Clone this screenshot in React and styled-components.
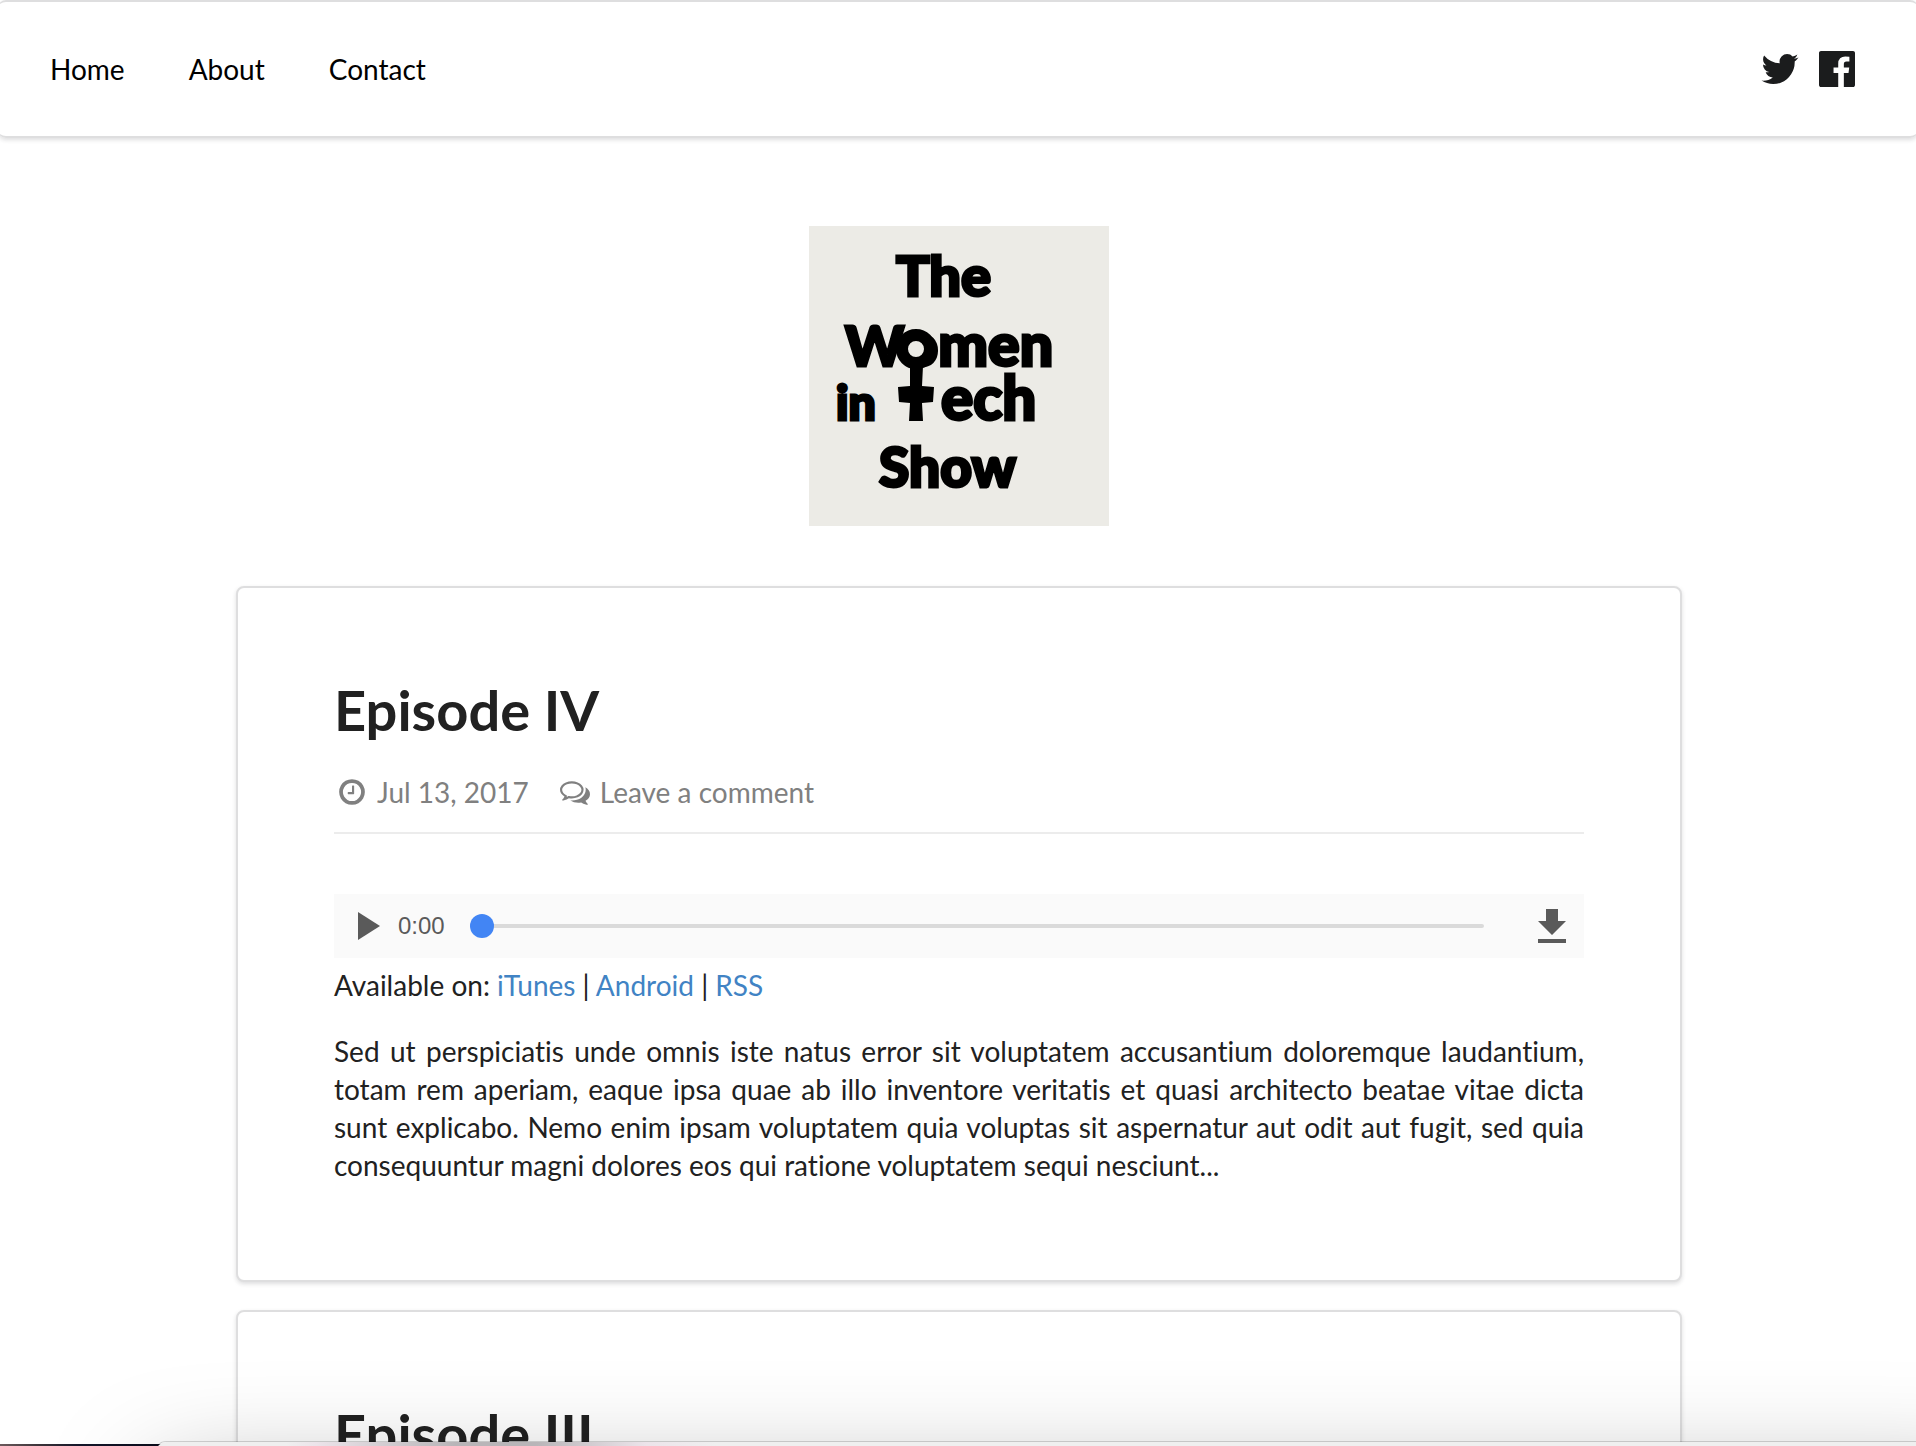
import React, { useState } from "react";
import styled, { createGlobalStyle } from "styled-components";

const GlobalStyle = createGlobalStyle`
  *, *::before, *::after { box-sizing: border-box; }
  html, body { margin: 0; height: 100%; overflow: hidden; }
  body {
    background: #fff;
    color: #212121;
    font-family: Lato, "Noto Sans", sans-serif;
    font-size: 28px;
    line-height: 38px;
    font-variant-ligatures: none;
  }
`;

const Page = styled.div`
  height: 100vh;
  overflow: hidden;
`;

const NavBar = styled.nav`
  display: flex;
  align-items: center;
  justify-content: space-between;
  height: 138px;
  margin: 0 -2px;
  padding: 0 60px 0 20px;
  border: solid #dededf;
  border-width: 2px 0;
  border-radius: 8px;
  box-shadow: 0 2px 4px rgba(34, 36, 38, 0.15);
`;

const NavLinks = styled.div`
  display: flex;
`;

const NavLink = styled.a`
  padding: 32px;
  color: #000;
  text-decoration: none;
`;

const SocialLinks = styled.div`
  display: flex;
  gap: 15px;
`;

const SocialLink = styled.a`
  display: flex;
  color: #1b1c1d;
`;

const Glyph = styled.svg`
  display: block;
  flex: none;
  width: ${(p) => p.$size}px;
  height: ${(p) => p.$size}px;
  fill: currentColor;
`;

const Logo = styled.svg`
  display: block;
  width: 300px;
  height: 300px;
  margin: 0 auto 60px;
  background: #ecebe6;
  font-family: Lato, sans-serif;
  font-weight: 900;
`;

const Content = styled.main`
  padding: 88px 0 0 2px;
`;

const Episodes = styled.section`
  width: 100%;
  max-width: 1446px;
  margin: 0 auto;
  display: flex;
  flex-direction: column;
  gap: 28px;
`;

const Card = styled.article`
  padding: 96px;
  background: #fff;
  border: 2px solid #dededf;
  border-radius: 8px;
  box-shadow: 0 2px 4px rgba(34, 36, 38, 0.15);
`;

const Title = styled.h1`
  margin: 0 0 37px;
  font-size: 56px;
  line-height: 52px;
  font-weight: 700;
`;

const Meta = styled.div`
  display: flex;
  gap: 31px;
  padding: 0 3px 21px;
  margin-bottom: 60px;
  border-bottom: 2px solid #ececec;
  color: #808080;
`;

const MetaItem = styled.span`
  display: flex;
  align-items: center;
  gap: 10px;
`;

const MetaLink = styled(MetaItem)`
  color: inherit;
  text-decoration: none;
`;

const Player = styled.div`
  display: flex;
  align-items: center;
  height: 64px;
  margin-bottom: 8px;
  padding: 0 15px 0 24px;
  background: #fafafa;
  color: #5a5a5a;
`;

const PlayerButton = styled.button`
  display: flex;
  padding: 0;
  border: 0;
  background: none;
  color: inherit;
  cursor: pointer;
`;

const Time = styled.span`
  margin: 0 25px 0 12px;
  font-family: "Liberation Sans", sans-serif;
  font-size: 24px;
`;

const Seek = styled.input`
  flex: 1;
  min-width: 0;
  height: 24px;
  margin: 0 51px 0 0;
  appearance: none;
  background: transparent;

  &::-webkit-slider-runnable-track {
    height: 4px;
    border-radius: 2px;
    background: #dadada;
  }
  &::-webkit-slider-thumb {
    appearance: none;
    width: 24px;
    height: 24px;
    margin-top: -10px;
    border-radius: 50%;
    background: #4285f4;
  }
`;

const Text = styled.p`
  margin: 0 0 28px;
  text-align: justify;
  &:last-child { margin-bottom: 0; }
`;

const TextLink = styled.a`
  color: #4183c4;
  text-decoration: none;
`;

const Desktop = styled.div`
  position: fixed;
  left: 0;
  right: 0;
  bottom: 0;
  height: 2px;
  background: linear-gradient(90deg, #6b5a5c, #3a3238 40px, #14162a 80px, #0b0d1c 158px);
`;

const FrontWindow = styled.div`
  position: fixed;
  left: 156px;
  right: -80px;
  top: calc(100vh - 4px);
  height: 400px;
  border-radius: 10px;
  background: linear-gradient(90deg, #efefef 130px, #ece4ea 160px, #b8b5b8 300px, #b8b5b8 380px, #ece4ea 490px, #efefef 560px);
  box-shadow: 0 0 0 1px rgba(0, 0, 0, 0.16), 0 40px 110px rgba(0, 0, 0, 0.35);
`;

const TWITTER =
  "M1684 408q-67 98-162 167 1 14 1 42 0 130-38 259.5t-115.5 248.5-184.5 210.5-258 146-323 54.5q-271 0-496-145 35 4 78 4 225 0 401-138-105-2-188-64.5t-114-159.5q33 5 61 5 43 0 85-11-112-23-185.5-111.5t-73.5-205.5v-4q68 38 146 41-66-44-105-115t-39-154q0-88 44-163 121 149 294.5 238.5t371.500 99.5q-8-38-8-74 0-134 94.5-228.5t228.5-94.5q140 0 236 102 109-21 205-78-37 115-142 178 93-10 186-50z";
const FACEBOOK =
  "M1579 128q35 0 60 25t25 60v1366q0 35-25 60t-60 25h-391v-595h199l30-232h-229v-148q0-56 23.5-84t91.500-28l122-1v-207q-63-9-178-9-136 0-217.500 80t-81.500 226v171h-200v232h200v595h-735q-35 0-60-25t-25-60v-1366q0-35 25-60t60-25h1366z";
const CLOCK =
  "M1024 544v448q0 14-9 23t-23 9h-320q-14 0-23-9t-9-23v-64q0-14 9-23t23-9h224v-352q0-14 9-23t23-9h64q14 0 23 9t9 23zm416 352q0-148-73-273t-198-198-273-73-273 73-198 198-73 273 73 273 198 198 273 73 273-73 198-198 73-273zm224 0q0 209-103 385.500t-279.500 279.500-385.500 103-385.500-103-279.500-279.500-103-385.500 103-385.500 279.500-279.500 385.500-103 385.500 103 279.500 279.500 103 385.500z";
const COMMENTS =
  "M704 384q-153 0-286 52t-211.500 141-78.500 191q0 82 53 158t149 132l97 56-35 84q34-20 62-39l44-31 53 10q78 14 153 14 153 0 286-52t211.500-141 78.500-191-78.500-191-211.500-141-286-52zm0-128q191 0 353.500 68.500t256.500 186.500 94 257-94 257-256.500 186.500-353.500 68.500q-86 0-176-16-124 88-278 128-36 9-86 16h-3q-11 0-20.500-8t-11.500-21q-1-3-1-6.500t.5-6.500 2-6l2.500-5 3.500-5.500 4-5 4.500-5 4-4.500q5-6 23-25t26-29.500 22.500-29 25-38.500 20.500-44q-124-72-195-177t-71-224q0-139 94-257t256.500-186.500 353.500-68.500zm822 1169q10 24 20.500 44t25 38.500 22.500 29 26 29.500 23 25q1 1 4 4.500t4.500 5 4 5 3.500 5.500l2.500 5 2 6 .5 6.500-1 6.500q-3 14-13 22t-22 7q-50-7-86-16-154-40-278-128-90 16-176 16-271 0-472-132 58 4 88 4 161 0 309-45t264-129q125-92 192-212t67-254q0-77-23-152 129 71 204 178t75 230q0 120-71 224.500t-195 176.500z";

function Icon({ d, size }) {
  return (
    <Glyph $size={size} viewBox="0 0 1792 1792" aria-hidden="true">
      <path d={d} />
    </Glyph>
  );
}

function ShowLogo() {
  return (
    <Logo viewBox="0 0 300 300" role="img" aria-label="The Women in Tech Show">
      <g stroke="#000" strokeWidth="3" strokeLinejoin="miter">
        <text x="87" y="70" fontSize="56">The</text>
        <text x="36" y="140" fontSize="59">
          <tspan fontSize="56">W</tspan>omen
        </text>
        <text x="27" y="194" fontSize="48">in</text>
        <text x="132" y="194" fontSize="60">ech</text>
        <text x="70" y="261" fontSize="55">Show</text>
      </g>
      <circle cx="107" cy="123" r="14" fill="#ecebe6" stroke="#000" strokeWidth="12" />
      <path d="M101 140h13l-1 20 12 1-1 15-11 1 1 18h-14l1-18-11-1-1-15 12-1z" />
    </Logo>
  );
}

function AudioPlayer({ title }) {
  const [position, setPosition] = useState(0);
  return (
    <Player>
      <PlayerButton type="button" aria-label={`Play ${title}`}>
        <Glyph $size={28} viewBox="0 0 28 28">
          <path d="M0 0l22 14L0 28z" />
        </Glyph>
      </PlayerButton>
      <Time>0:00</Time>
      <Seek
        type="range"
        min="0"
        max="100"
        value={position}
        onChange={(e) => setPosition(Number(e.target.value))}
        aria-label={`Seek in ${title}`}
      />
      <PlayerButton type="button" aria-label={`Download ${title}`}>
        <Glyph $size={34} viewBox="-3 0 34 34">
          <path d="M8 0h12v12h8L14 26 0 12h8zM0 30h28v4H0z" />
        </Glyph>
      </PlayerButton>
    </Player>
  );
}

function Episode({ title, date, summary }) {
  return (
    <Card>
      <Title>{title}</Title>
      <Meta>
        <MetaItem>
          <Icon d={CLOCK} size={30} />
          {date}
        </MetaItem>
        <MetaLink as="a" href="#comments">
          <Icon d={COMMENTS} size={30} />
          Leave a comment
        </MetaLink>
      </Meta>
      <AudioPlayer title={title} />
      <Text>
        Available on: <TextLink href="#itunes">iTunes</TextLink> |{" "}
        <TextLink href="#android">Android</TextLink> | <TextLink href="#rss">RSS</TextLink>
      </Text>
      <Text>{summary}</Text>
    </Card>
  );
}

const SUMMARY =
  "Sed ut perspiciatis unde omnis iste natus error sit voluptatem accusantium doloremque laudantium, totam rem aperiam, eaque ipsa quae ab illo inventore veritatis et quasi architecto beatae vitae dicta sunt explicabo. Nemo enim ipsam voluptatem quia voluptas sit aspernatur aut odit aut fugit, sed quia consequuntur magni dolores eos qui ratione voluptatem sequi nesciunt...";

export default function App() {
  return (
    <>
      <GlobalStyle />
      <Page>
        <NavBar>
          <NavLinks>
            <NavLink href="#home">Home</NavLink>
            <NavLink href="#about">About</NavLink>
            <NavLink href="#contact">Contact</NavLink>
          </NavLinks>
          <SocialLinks>
            <SocialLink href="#twitter" aria-label="Twitter">
              <Icon d={TWITTER} size={42} />
            </SocialLink>
            <SocialLink href="#facebook" aria-label="Facebook">
              <Icon d={FACEBOOK} size={42} />
            </SocialLink>
          </SocialLinks>
        </NavBar>
        <Content>
          <ShowLogo />
          <Episodes>
            <Episode title="Episode IV" date="Jul 13, 2017" summary={SUMMARY} />
            <Card>
              <Title>Episode III</Title>
            </Card>
          </Episodes>
        </Content>
      </Page>
      <Desktop />
      <FrontWindow />
    </>
  );
}
